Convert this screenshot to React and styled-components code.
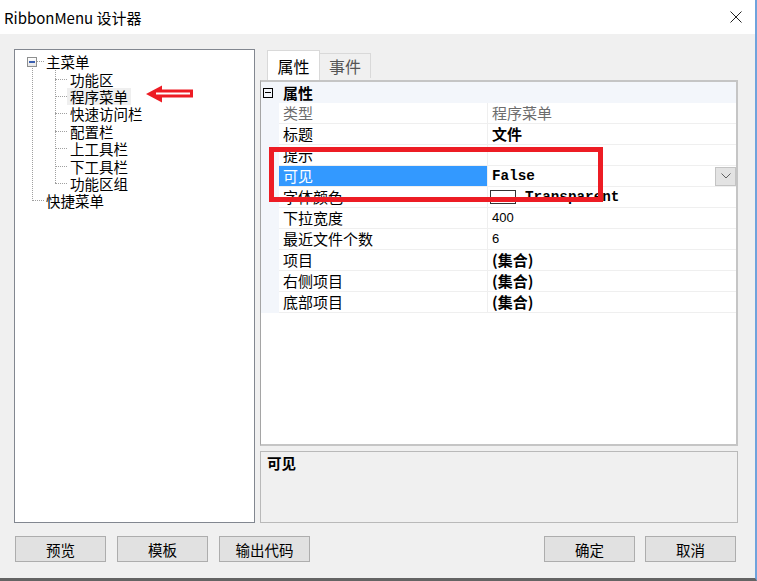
import React from "react";
import styled, { createGlobalStyle } from "styled-components";

const CJK = `"Noto Sans CJK SC", "Noto Sans", sans-serif`;
const MONO = `"Liberation Mono", "DejaVu Sans Mono", monospace`;
const ROW = 17.4;

const GlobalStyle = createGlobalStyle`
  html, body {
    margin: 0;
    padding: 0;
    background: #f0f0f0;
  }
  * {
    box-sizing: border-box;
  }
`;

const Window = styled.div`
  position: relative;
  width: 757px;
  height: 581px;
  background: #f0f0f0;
  border-right: 2px solid #6fa3dc;
  border-bottom: 3px solid #646464;
  display: flex;
  flex-direction: column;
  font-family: ${CJK};
  color: #000;
  overflow: hidden;
`;

const TitleBar = styled.div`
  flex: none;
  height: 34px;
  background: #fff;
  display: flex;
  align-items: center;
  justify-content: space-between;
  padding: 0 13px 0 4px;
  font-size: 15px;
`;

const Body = styled.div`
  flex: 1;
  display: flex;
  flex-direction: column;
  padding: 15px 17px 16px 14px;
`;

const Main = styled.div`
  display: flex;
  gap: 5px;
  height: 474px;
`;

//================================ Tree =================================

const TreePanel = styled.div`
  position: relative;
  width: 241px;
  flex: none;
  background: #fff;
  border: 1px solid #828790;
  padding-top: 3px;
  font-size: 14.5px;
`;

const Level = styled.div`
  position: relative;
  &::before {
    content: "";
    position: absolute;
    left: ${({ $line }) => $line}px;
    top: ${({ $top }) => $top}px;
    bottom: ${ROW / 2}px;
    border-left: 1px dotted #a0a0a0;
  }
`;

const Row = styled.div`
  position: relative;
  display: flex;
  align-items: center;
  height: ${ROW}px;
  padding-left: ${({ $indent }) => $indent}px;
`;

const Connector = styled.span`
  width: ${({ $w }) => $w}px;
  height: 0;
  border-top: 1px dotted #a0a0a0;
`;

const Toggle = styled.span`
  position: relative;
  width: 10px;
  height: 10px;
  border: 1px solid #8e8f8f;
  background: linear-gradient(#ffffff, #e6e6e6);
  &::after {
    content: "";
    position: absolute;
    left: 1px;
    right: 1px;
    top: 3px;
    height: 2px;
    background: #3a5fb0;
  }
`;

const Label = styled.span`
  padding: 0 ${({ $pad }) => $pad}px;
  line-height: 17px;
  white-space: nowrap;
  background: ${({ $selected }) => ($selected ? "#efefef" : "transparent")};
`;

const Arrow = styled.svg`
  position: absolute;
  left: 131px;
  top: 35px;
`;

//================================ Right side =================================

const RightColumn = styled.div`
  flex: 1;
  min-width: 0;
  display: flex;
  flex-direction: column;
`;

const TabStrip = styled.div`
  height: 31px;
  flex: none;
  display: flex;
  align-items: flex-end;
  padding-left: 7px;
`;

const Tab = styled.div`
  position: relative;
  z-index: ${({ $active }) => ($active ? 1 : 0)};
  width: ${({ $w }) => $w}px;
  height: ${({ $active }) => ($active ? 30 : 25)}px;
  margin-bottom: ${({ $active }) => ($active ? 0 : 2)}px;
  margin-left: ${({ $active }) => ($active ? 0 : -1)}px;
  border: 1px solid #d9d9d9;
  border-bottom: none;
  background: ${({ $active }) => ($active ? "#fff" : "#f0f0f0")};
  color: ${({ $active }) => ($active ? "#000" : "#555")};
  font-size: 16px;
  display: flex;
  align-items: center;
  justify-content: center;
`;

const Grid = styled.div`
  position: relative;
  flex: none;
  height: 366px;
  background: #fff;
  border: 2px solid #c5c5c5;
  border-left: 1px solid #a5a5a5;
  font-size: 15px;
`;

const CategoryRow = styled.div`
  display: flex;
  align-items: center;
  height: 21px;
  background: #f3f6fb;
  font-weight: 700;
  line-height: 20px;
`;

const CategoryToggle = styled.span`
  position: relative;
  width: 10px;
  height: 10px;
  margin: 0 10px 0 2px;
  border: 1px solid #000;
  &::after {
    content: "";
    position: absolute;
    left: 1px;
    right: 1px;
    top: 3px;
    height: 1px;
    background: #000;
  }
`;

const PropRow = styled.div`
  display: flex;
  height: 21px;
`;

const Gutter = styled.div`
  width: 18px;
  flex: none;
  background: #f3f6fb;
`;

const NameCell = styled.div`
  width: 209px;
  flex: none;
  padding-left: 4px;
  line-height: 20px;
  border-bottom: 1px solid #efefef;
  border-right: 1px solid #efefef;
  white-space: nowrap;
  background: ${({ $selected }) => ($selected ? "#3399ff" : "transparent")};
  color: ${({ $selected, $muted }) => ($selected ? "#fff" : $muted ? "#6d6d6d" : "#000")};
`;

const ValueCell = styled.div`
  flex: 1;
  display: flex;
  align-items: center;
  padding-left: 4px;
  border-bottom: 1px solid #efefef;
  white-space: nowrap;
`;

const ValueText = styled.span`
  line-height: 20px;
  color: ${({ $muted }) => ($muted ? "#6d6d6d" : "#000")};
  font-weight: ${({ $bold }) => ($bold ? 700 : 400)};
`;

const NumberText = styled.span`
  font-family: "Liberation Sans", sans-serif;
  font-size: 13px;
  line-height: 20px;
`;

const MonoText = styled.span`
  font-family: ${MONO};
  font-weight: 700;
  font-size: 14.3px;
  line-height: 20px;
`;

const Swatch = styled.span`
  width: 26px;
  height: 14px;
  margin: 0 9px 0 -2px;
  border: 1px solid #333;
  background: #fff;
`;

const DropButton = styled.span`
  margin-left: auto;
  width: 21px;
  height: 19px;
  display: flex;
  align-items: center;
  justify-content: center;
  background: #e3e3e3;
  border: 1px solid #c4c4c4;
`;

const Highlight = styled.div`
  position: absolute;
  left: 8px;
  top: 65px;
  width: 334px;
  height: 55px;
  border: 5px solid #ed1c24;
  pointer-events: none;
`;

const Description = styled.div`
  flex: 1;
  margin-top: 5px;
  border: 1px solid #b9b9b9;
  background: #f0f0f0;
  padding: 1px 6px;
  font-size: 14.5px;
  font-weight: 700;
  line-height: 20px;
`;

//================================ Buttons =================================

const ButtonBar = styled.div`
  display: flex;
  justify-content: space-between;
  margin-top: 13px;
  padding: 0 2px 0 1px;
`;

const ButtonGroup = styled.div`
  display: flex;
  gap: ${({ $gap }) => $gap}px;
`;

const Button = styled.button`
  width: 91px;
  height: 26px;
  padding: 0;
  background: #e1e1e1;
  border: 1px solid #adadad;
  font-family: ${CJK};
  font-size: 14.5px;
  color: #000;
`;

const children = ["功能区", "程序菜单", "快速访问栏", "配置栏", "上工具栏", "下工具栏", "功能区组"];

const props = [
  { name: "类型", muted: true, value: <ValueText $muted>程序菜单</ValueText> },
  { name: "标题", value: <ValueText $bold>文件</ValueText> },
  { name: "提示", value: null },
  {
    name: "可见",
    selected: true,
    value: (
      <>
        <MonoText>False</MonoText>
        <DropButton>
          <svg width="10" height="6" viewBox="0 0 10 6">
            <polyline points="0.5,0.5 5,5 9.5,0.5" fill="none" stroke="#606060" strokeWidth="1" />
          </svg>
        </DropButton>
      </>
    ),
  },
  {
    name: "字体颜色",
    value: (
      <>
        <Swatch />
        <MonoText>Transparent</MonoText>
      </>
    ),
  },
  { name: "下拉宽度", value: <NumberText>400</NumberText> },
  { name: "最近文件个数", value: <NumberText>6</NumberText> },
  { name: "项目", value: <ValueText $bold>(集合)</ValueText> },
  { name: "右侧项目", value: <ValueText $bold>(集合)</ValueText> },
  { name: "底部项目", value: <ValueText $bold>(集合)</ValueText> },
];

export default function App() {
  return (
    <>
      <GlobalStyle />
      <Window>
        <TitleBar>
          <span>RibbonMenu 设计器</span>
          <svg width="12" height="12" viewBox="0 0 12 12">
            <path d="M0.5 0.5 L11.5 11.5 M11.5 0.5 L0.5 11.5" stroke="#222" strokeWidth="1" />
          </svg>
        </TitleBar>

        <Body>
          <Main>
            <TreePanel>
              <Level $line={17} $top={ROW / 2}>
                <Row $indent={12}>
                  <Toggle />
                  <Connector $w={7} />
                  <Label $pad={2}>主菜单</Label>
                </Row>
                <Level $line={40} $top={0}>
                  {children.map((c) => (
                    <Row key={c} $indent={40}>
                      <Connector $w={12} />
                      <Label $pad={3} $selected={c === "程序菜单"}>{c}</Label>
                    </Row>
                  ))}
                </Level>
                <Row $indent={17}>
                  <Connector $w={12} />
                  <Label $pad={2}>快捷菜单</Label>
                </Row>
              </Level>

              <Arrow width="48" height="18" viewBox="0 0 48 18">
                <polygon points="0,9 16,0.5 16,4.5 47,4.5 47,12.5 16,12.5 16,17.5" fill="#ed1c24" />
                <line x1="10" y1="8.5" x2="44" y2="8.5" stroke="#fff" strokeWidth="1.8" />
              </Arrow>
            </TreePanel>

            <RightColumn>
              <TabStrip>
                <Tab $active $w={53}>属性</Tab>
                <Tab $w={52}>事件</Tab>
              </TabStrip>

              <Grid>
                <CategoryRow>
                  <CategoryToggle />
                  <span>属性</span>
                </CategoryRow>
                {props.map((p) => (
                  <PropRow key={p.name}>
                    <Gutter />
                    <NameCell $selected={p.selected} $muted={p.muted}>{p.name}</NameCell>
                    <ValueCell>{p.value}</ValueCell>
                  </PropRow>
                ))}
                <Highlight />
              </Grid>

              <Description>可见</Description>
            </RightColumn>
          </Main>

          <ButtonBar>
            <ButtonGroup $gap={11}>
              <Button>预览</Button>
              <Button>模板</Button>
              <Button>输出代码</Button>
            </ButtonGroup>
            <ButtonGroup $gap={10}>
              <Button>确定</Button>
              <Button>取消</Button>
            </ButtonGroup>
          </ButtonBar>
        </Body>
      </Window>
    </>
  );
}
